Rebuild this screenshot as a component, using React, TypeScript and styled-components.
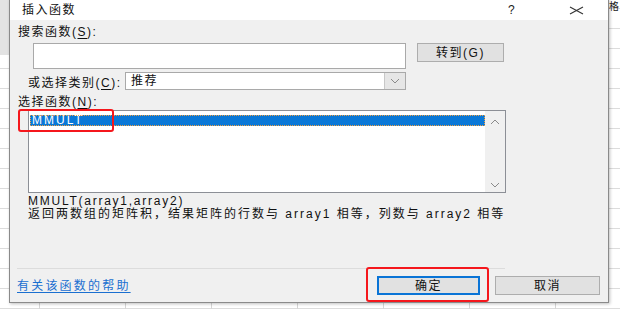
import React from "react";
import styled, { createGlobalStyle } from "styled-components";

const GlobalStyle = createGlobalStyle`
  html, body {
    margin: 0;
    padding: 0;
  }
  body {
    width: 620px;
    height: 309px;
    overflow: hidden;
    background: #fff;
    font-family: "Liberation Sans", "Noto Sans CJK SC", sans-serif;
  }
`;

const Sheet = styled.div`
  position: relative;
  width: 620px;
  height: 309px;
  overflow: hidden;
  display: flex;
  align-items: flex-start;
  padding-left: 609px;
  box-sizing: border-box;
  background-color: #fff;
  background-image:
    linear-gradient(#e3e3e3, #e3e3e3),
    linear-gradient(to right, #d6d6d6 1px, transparent 1px),
    linear-gradient(to bottom, #dcdcdc 1px, transparent 1px);
  background-size: 10px 55px, 86px 100%, 100% 20px;
  background-repeat: no-repeat, repeat, repeat;
  background-position: 0 0, 39px 0, 0 8px;
`;

const CellText = styled.span`
  font-size: 10px;
  line-height: 14px;
  color: #222;
  white-space: nowrap;
`;

const Dialog = styled.div`
  position: absolute;
  left: 9px;
  top: -1px;
  width: 600px;
  height: 304px;
  box-sizing: border-box;
  border: 1px solid #8a8a8a;
  background: #f0f0f0;
  box-shadow: 1px 1px 3px rgba(0, 0, 0, 0.25);
  display: flex;
  flex-direction: column;
  font-size: 12px;
  letter-spacing: 1.5px;
  color: #111;
`;

const TitleBar = styled.div`
  height: 20px;
  flex: none;
  display: flex;
  align-items: center;
  padding-left: 12px;
  padding-right: 17px;
  background: #fff;
`;

const Title = styled.span`
  flex: 1;
  line-height: 16px;
`;

const TitleButton = styled.span`
  width: 30px;
  display: flex;
  justify-content: center;
  align-items: center;
  font-size: 12px;
  color: #222;
  & + & {
    margin-left: 34px;
  }
`;

const Body = styled.div`
  flex: 1;
  display: flex;
  flex-direction: column;
`;

const Label = styled.div<{ $top: number; $indent: number }>`
  margin-top: ${(p) => p.$top}px;
  padding-left: ${(p) => p.$indent}px;
  height: 16px;
  line-height: 16px;
`;

const Key = styled.u`
  text-underline-offset: 2px;
`;

const SearchRow = styled.div`
  display: flex;
  align-items: flex-start;
  gap: 11px;
  margin-top: 3px;
  padding-left: 23px;
`;

const TextBox = styled.div`
  width: 373px;
  height: 26px;
  box-sizing: border-box;
  border: 1px solid #a9a9a9;
  background: #fff;
`;

const Button = styled.div<{ $w: number; $primary?: boolean }>`
  position: relative;
  width: ${(p) => p.$w}px;
  height: 19px;
  box-sizing: border-box;
  display: flex;
  align-items: center;
  justify-content: center;
  background: #e1e1e1;
  border: ${(p) => (p.$primary ? "2px solid #0a74d6" : "1px solid #adadad")};
  line-height: 16px;
`;

const CategoryRow = styled.div`
  display: flex;
  align-items: center;
  margin-top: 3px;
  padding-left: 18px;
  height: 18px;
`;

const CategoryLabel = styled.span`
  width: 97px;
  white-space: nowrap;
`;

const Select = styled.div`
  width: 281px;
  height: 18px;
  box-sizing: border-box;
  border: 1px solid #a9a9a9;
  background: #fff;
  display: flex;
  align-items: center;
`;

const SelectValue = styled.span`
  flex: 1;
  padding-left: 5px;
  line-height: 16px;
`;

const DropButton = styled.span`
  width: 20px;
  height: 100%;
  display: flex;
  align-items: center;
  justify-content: center;
  background: #e6e6e6;
  border-left: 1px solid #c8c8c8;
`;

const ListBox = styled.div`
  position: relative;
  margin-left: 18px;
  width: 478px;
  height: 83px;
  box-sizing: border-box;
  border: 1px solid #8c8f96;
  background: #fff;
  display: flex;
`;

const Items = styled.div`
  flex: 1;
  padding: 4px 0 0 1px;
`;

const Item = styled.div<{ $selected?: boolean }>`
  height: 11px;
  line-height: 11px;
  padding-left: 2px;
  font-size: 12px;
  letter-spacing: 2px;
  color: ${(p) => (p.$selected ? "#fff" : "#1a1a1a")};
  background: ${(p) => (p.$selected ? "#0a78d7" : "transparent")};
  outline: ${(p) => (p.$selected ? "1px dotted #f0a040" : "none")};
  outline-offset: -1px;
`;

const ScrollBar = styled.div`
  width: 20px;
  background: #f0f0f0;
  display: flex;
  flex-direction: column;
  justify-content: space-between;
  align-items: center;
  padding: 8px 0 4px;
`;

const Highlight = styled.div<{ $l: number; $t: number; $w: number; $h: number }>`
  position: absolute;
  left: ${(p) => p.$l}px;
  top: ${(p) => p.$t}px;
  width: ${(p) => p.$w}px;
  height: ${(p) => p.$h}px;
  box-sizing: border-box;
  border: 2px solid #f5171c;
  border-radius: 3px;
  pointer-events: none;
`;

const Syntax = styled.div`
  margin-top: 2px;
  padding-left: 18px;
  line-height: 13px;
  white-space: nowrap;
  letter-spacing: 1.75px;
`;

const Description = styled.div`
  padding-left: 18px;
  line-height: 13px;
  white-space: nowrap;
  letter-spacing: 2px;
`;

const Spacer = styled.div`
  flex: 1;
`;

const Separator = styled.div`
  margin-left: 7px;
  width: 488px;
  height: 1px;
  background: #dcdcdc;
`;

const Footer = styled.div`
  height: 33px;
  display: flex;
  align-items: center;
  padding: 0 8px 0 7px;
  gap: 15px;
`;

const HelpLink = styled.a`
  flex: 1;
  color: #1a6fd0;
  letter-spacing: 2.2px;
  text-decoration: underline;
  text-underline-offset: 2px;
  line-height: 16px;
`;

const Chevron: React.FC<{ up?: boolean }> = ({ up }) => (
  <svg width="10" height="6" viewBox="0 0 10 6">
    <polyline
      points={up ? "1,5 5,1 9,5" : "1,1 5,5 9,1"}
      fill="none"
      stroke="#8a8a8a"
      strokeWidth="1"
    />
  </svg>
);

export default function App() {
  return (
    <>
      <GlobalStyle />
      <Sheet>
        <CellText>格</CellText>
        <Dialog>
          <TitleBar>
            <Title>插入函数</Title>
            <TitleButton>?</TitleButton>
            <TitleButton>
              <svg width="15" height="9" viewBox="0 0 15 9">
                <path d="M1 1 L14 8 M14 1 L1 8" stroke="#333" strokeWidth="1.1" />
              </svg>
            </TitleButton>
          </TitleBar>
          <Body>
            <Label $top={4} $indent={8}>
              搜索函数(<Key>S</Key>):
            </Label>
            <SearchRow>
              <TextBox />
              <Button $w={87}>转到(G)</Button>
            </SearchRow>
            <CategoryRow>
              <CategoryLabel>
                或选择类别(<Key>C</Key>):
              </CategoryLabel>
              <Select>
                <SelectValue>推荐</SelectValue>
                <DropButton>
                  <Chevron />
                </DropButton>
              </Select>
            </CategoryRow>
            <Label $top={4} $indent={8}>
              选择函数(<Key>N</Key>):
            </Label>
            <ListBox>
              <Items>
                <Item $selected>MMULT</Item>
              </Items>
              <ScrollBar>
                <Chevron up />
                <Chevron />
              </ScrollBar>
              <Highlight $l={-11} $t={-2} $w={96} $h={23} />
            </ListBox>
            <Syntax>MMULT(array1,array2)</Syntax>
            <Description>
              返回两数组的矩阵积，结果矩阵的行数与 array1 相等，列数与 array2 相等
            </Description>
            <Spacer />
            <Separator />
            <Footer>
              <HelpLink>有关该函数的帮助</HelpLink>
              <Button $w={103} $primary>
                确定
                <Highlight $l={-13} $t={-11} $w={123} $h={35} />
              </Button>
              <Button $w={105}>取消</Button>
            </Footer>
          </Body>
        </Dialog>
      </Sheet>
    </>
  );
}
